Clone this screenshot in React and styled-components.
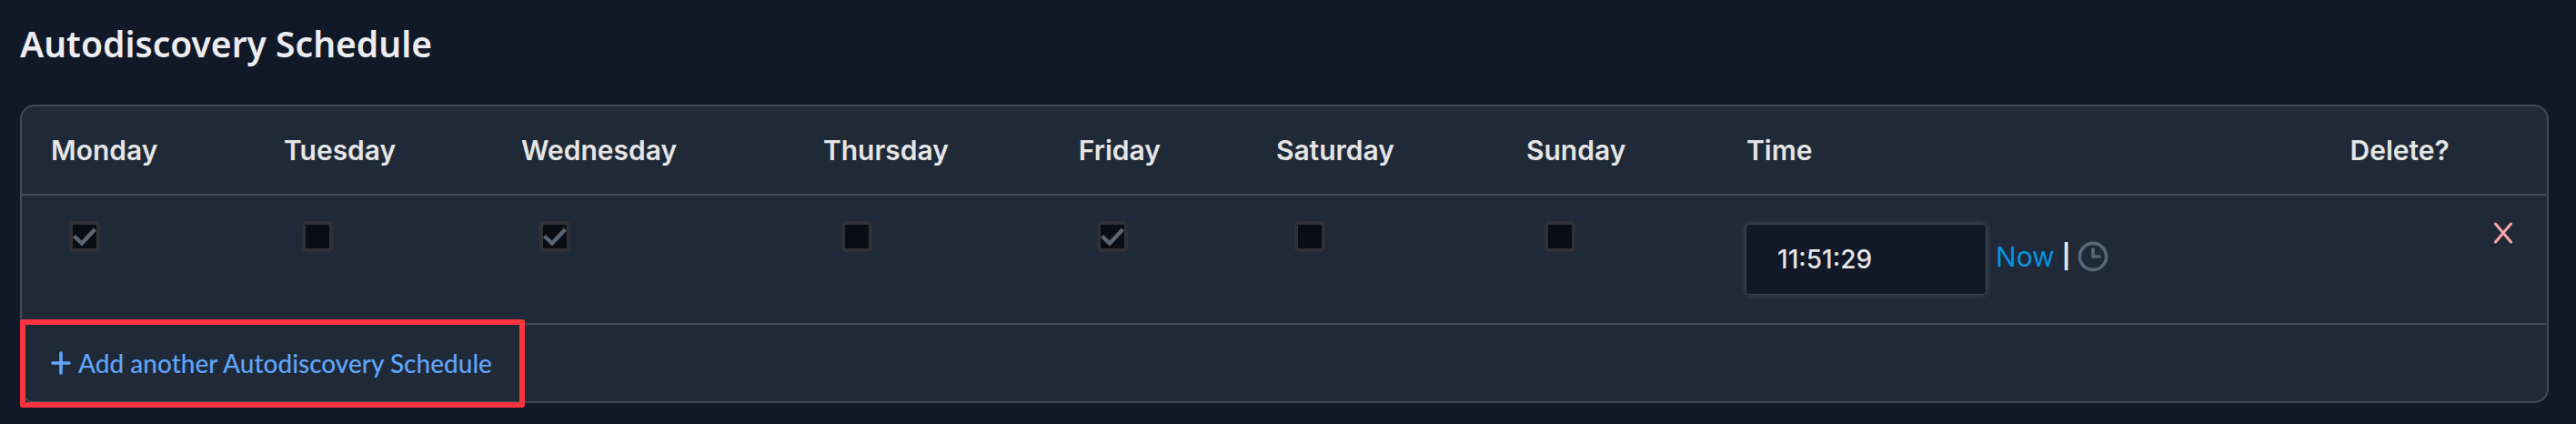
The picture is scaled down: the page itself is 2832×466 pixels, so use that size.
import React, { useState } from "react";
import styled, { createGlobalStyle } from "styled-components";

const GlobalStyle = createGlobalStyle`
  * {
    box-sizing: border-box;
  }

  body {
    margin: 0;
    background-color: #111827;
    color: #e5e5e5;
    font-family: "Inter", "Roboto", sans-serif;
    font-size: 30px;
    line-height: 48px;
  }
`;

const Page = styled.main`
  padding: 24px 30px 22px 22px;
`;

const Title = styled.h2`
  margin: 0 0 43px;
  font-family: "Noto Sans", "Open Sans", sans-serif;
  font-size: 39px;
  font-weight: 600;
  line-height: 48px;
  color: #ebecef;
`;

const Panel = styled.section`
  background-color: #1f2937;
  border: 2px solid #424a57;
  border-radius: 16px;
`;

const Table = styled.table`
  width: 100%;
  table-layout: fixed;
  border-collapse: separate;
  border-spacing: 0;
`;

const Col = styled.col`
  width: ${(props) => props.$width};
`;

const HeadCell = styled.th`
  padding: 24px 32px;
  border-bottom: 2px solid #424a57;
  font-weight: 600;
  text-align: left;
  white-space: nowrap;
`;

const Cell = styled.td`
  padding: ${(props) => props.$padding || "28px 32px"};
  border-bottom: 2px solid #424a57;
  vertical-align: top;
  text-align: ${(props) => props.$align || "left"};
`;

const Checkbox = styled.input`
  appearance: none;
  display: block;
  width: 34px;
  height: 34px;
  margin: 0 20px;
  border: 4px solid #303136;
  border-radius: 5px;
  background: #0a0d14;
  cursor: pointer;
`;

const CheckBoxWrap = styled.label`
  display: grid;
  justify-content: start;

  > * {
    grid-area: 1 / 1;
  }

  svg {
    margin: 4px 24px;
    pointer-events: none;
  }
`;

const TimeField = styled.div`
  display: flex;
  align-items: center;
`;

const TimeInput = styled.input`
  width: 263px;
  height: 76px;
  padding: 0 34px;
  border: 0;
  border-radius: 4px;
  outline: none;
  background-color: #111827;
  box-shadow: 0 0 6px 1px #4b5361;
  color: #e5e5e5;
  font-family: inherit;
  font-size: 28px;
  font-weight: 500;
`;

const TimeActions = styled.div`
  display: flex;
  align-items: center;
  gap: 8px;
  margin: 0 0 6px 11px;
`;

const NowLink = styled.a`
  color: #0594e0;
  text-decoration: none;
`;

const Divider = styled.span`
  font-size: 26px;
  font-weight: 700;
`;

const IconButton = styled.button`
  display: inline-flex;
  padding: 0;
  border: 0;
  background: none;
  color: ${(props) => props.$color};
  cursor: pointer;
`;

const Footer = styled.div`
  display: flex;
`;

const Highlight = styled.div`
  position: relative;
  padding: 18px 36px 18px 32px;

  &::after {
    content: "";
    position: absolute;
    inset: -6px 0 -7px -2px;
    border: 6px solid #fb343f;
    border-radius: 3px;
    pointer-events: none;
  }
`;

const AddLink = styled.a`
  display: flex;
  align-items: center;
  gap: 8px;
  color: #60a5fa;
  font-family: "Lato", "Roboto", sans-serif;
  font-size: 28px;
  font-weight: 500;
  text-decoration: none;
`;

const DAYS = [
  { name: "Monday", width: "9.22%", on: true },
  { name: "Tuesday", width: "9.4%", on: false },
  { name: "Wednesday", width: "11.96%", on: true },
  { name: "Thursday", width: "10.12%", on: false },
  { name: "Friday", width: "7.82%", on: true },
  { name: "Saturday", width: "9.91%", on: false },
  { name: "Sunday", width: "8.72%", on: false },
];

const CheckMark = () => (
  <svg width="26" height="26" viewBox="0 0 26 26" fill="none" aria-hidden="true">
    <path d="M1.5 12.5L10 20.5L24.5 5" stroke="#5b6675" strokeWidth="4.4" />
  </svg>
);

const ClockIcon = () => (
  <svg width="34" height="34" viewBox="0 0 34 34" fill="none" stroke="currentColor" strokeWidth="3.6">
    <circle cx="17" cy="17" r="14.6" />
    <path d="M17 9V17H24" strokeLinecap="round" strokeLinejoin="round" />
  </svg>
);

const CrossIcon = () => (
  <svg width="20" height="24" viewBox="0 0 20 24" fill="none">
    <path d="M1.5 2L18.5 22M18.5 2L1.5 22" stroke="currentColor" strokeWidth="3" strokeLinecap="round" />
  </svg>
);

const PlusIcon = () => (
  <svg width="22" height="26" viewBox="0 0 22 26" fill="none" aria-hidden="true">
    <path d="M11 2V24M2 13H20" stroke="currentColor" strokeWidth="3.6" strokeLinecap="round" />
  </svg>
);

const App = () => {
  const [checked, setChecked] = useState(DAYS.map((day) => day.on));
  const [time, setTime] = useState("11:51:29");

  const toggleDay = (index) =>
    setChecked(checked.map((value, i) => (i === index ? !value : value)));

  const setNow = (e) => {
    e.preventDefault();
    setTime(new Date().toTimeString().slice(0, 8));
  };

  return (
    <Page>
      <GlobalStyle />
      <Title>Autodiscovery Schedule</Title>
      <Panel>
        <Table>
          <colgroup>
            {DAYS.map((day) => (
              <Col key={day.name} $width={day.width} />
            ))}
            <Col $width="23.9%" />
            <Col $width="8.95%" />
          </colgroup>
          <thead>
            <tr>
              {DAYS.map((day) => (
                <HeadCell key={day.name}>{day.name}</HeadCell>
              ))}
              <HeadCell>Time</HeadCell>
              <HeadCell>Delete?</HeadCell>
            </tr>
          </thead>
          <tbody>
            <tr>
              {DAYS.map((day, index) => (
                <Cell key={day.name}>
                  <CheckBoxWrap>
                    <Checkbox
                      type="checkbox"
                      aria-label={day.name}
                      checked={checked[index]}
                      onChange={() => toggleDay(index)}
                    />
                    {checked[index] && <CheckMark />}
                  </CheckBoxWrap>
                </Cell>
              ))}
              <Cell $padding="32px">
                <TimeField>
                  <TimeInput
                    type="text"
                    aria-label="Time"
                    value={time}
                    onChange={(e) => setTime(e.target.value)}
                  />
                  <TimeActions>
                    <NowLink href="#now" onClick={setNow}>Now</NowLink>
                    <Divider>|</Divider>
                    <IconButton type="button" aria-label="Choose a time" $color="#5b6675">
                      <ClockIcon />
                    </IconButton>
                  </TimeActions>
                </TimeField>
              </Cell>
              <Cell $align="right" $padding="18px 38px">
                <IconButton type="button" aria-label="Delete" $color="#fca5a5">
                  <CrossIcon />
                </IconButton>
              </Cell>
            </tr>
          </tbody>
        </Table>
        <Footer>
          <Highlight>
            <AddLink href="#add">
              <PlusIcon />
              Add another Autodiscovery Schedule
            </AddLink>
          </Highlight>
        </Footer>
      </Panel>
    </Page>
  );
};

export default App;
